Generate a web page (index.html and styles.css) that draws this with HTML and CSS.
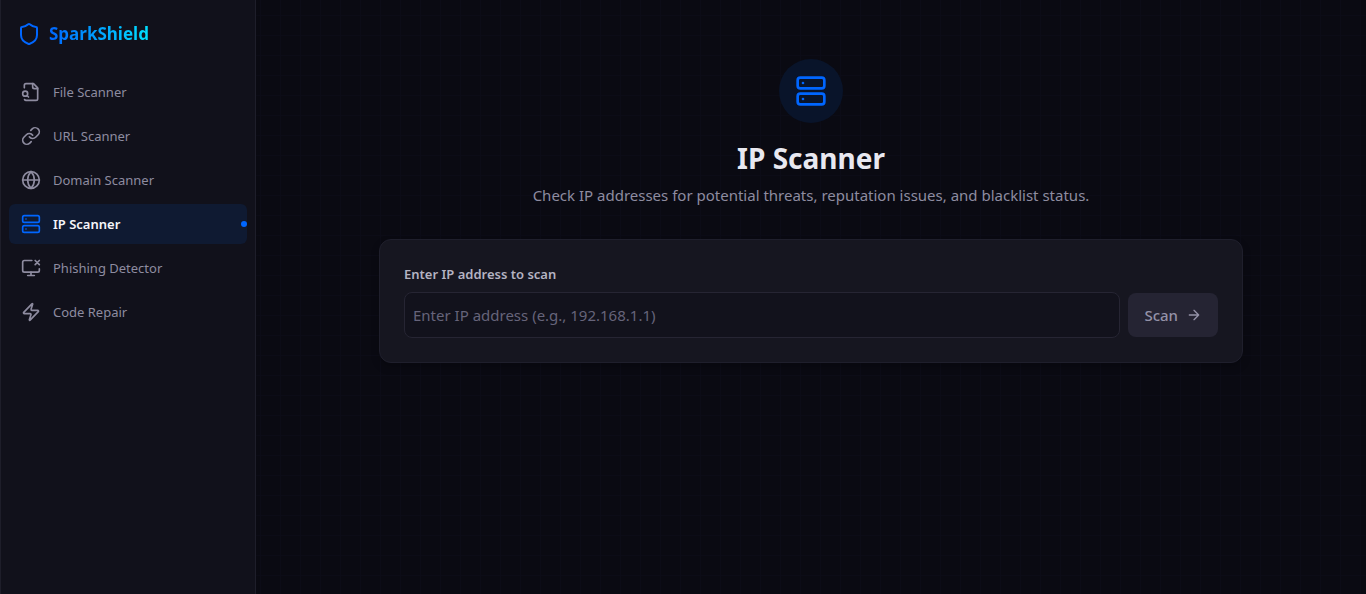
FILE: index.html
```html
<!DOCTYPE html>
<html lang="en">
<head>
<meta charset="utf-8">
<meta name="viewport" content="width=device-width, initial-scale=1">
<title>SparkShield – IP Scanner</title>
<link rel="stylesheet" href="styles.css">
</head>
<body>
<div class="app">
  <aside class="sidebar">
    <a class="brand" href="#">
      <svg class="icon icon-brand" viewBox="0 0 24 24"><path d="M20 13c0 5-3.500 7.500-7.660 8.950a1 1 0 0 1-.67-.01C7.500 20.500 4 18 4 13V6a1 1 0 0 1 1-1c2 0 4.500-1.200 6.240-2.720a1.170 1.170 0 0 1 1.520 0C14.510 3.810 17 5 19 5a1 1 0 0 1 1 1z"/></svg>
      <span class="brand-name">SparkShield</span>
    </a>
    <nav class="nav">
      <a class="nav-link" href="#">
        <svg class="icon" viewBox="0 0 24 24"><path d="M14 2v4a2 2 0 0 0 2 2h4"/><path d="M4.268 21a2 2 0 0 0 1.727 1H18a2 2 0 0 0 2-2V7l-5-5H6a2 2 0 0 0-2 2v3"/><path d="m9 18-1.500-1.500"/><circle cx="5" cy="14" r="3"/></svg>
        <span>File Scanner</span>
      </a>
      <a class="nav-link" href="#">
        <svg class="icon" viewBox="0 0 24 24"><path d="M10 13a5 5 0 0 0 7.540.54l3-3a5 5 0 0 0-7.070-7.070l-1.720 1.710"/><path d="M14 11a5 5 0 0 0-7.540-.54l-3 3a5 5 0 0 0 7.070 7.070l1.710-1.710"/></svg>
        <span>URL Scanner</span>
      </a>
      <a class="nav-link" href="#">
        <svg class="icon" viewBox="0 0 24 24"><circle cx="12" cy="12" r="10"/><path d="M12 2a14.500 14.500 0 0 0 0 20 14.500 14.500 0 0 0 0-20"/><path d="M2 12h20"/></svg>
        <span>Domain Scanner</span>
      </a>
      <a class="nav-link nav-link-active" href="#" aria-current="page">
        <svg class="icon" viewBox="0 0 24 24"><rect x="2" y="2" width="20" height="8" rx="2"/><rect x="2" y="14" width="20" height="8" rx="2"/><path d="M6 6h.01M6 18h.01"/></svg>
        <span>IP Scanner</span>
      </a>
      <a class="nav-link" href="#">
        <svg class="icon" viewBox="0 0 24 24"><path d="M22 13v2a2 2 0 0 1-2 2H4a2 2 0 0 1-2-2V5a2 2 0 0 1 2-2h9"/><path d="m17 3 5 5M22 3l-5 5"/><path d="M12 17v4M8 21h8"/></svg>
        <span>Phishing Detector</span>
      </a>
      <a class="nav-link" href="#">
        <svg class="icon" viewBox="0 0 24 24"><path d="M4 14a1 1 0 0 1-.78-1.630l9.900-10.200a.5.5 0 0 1 .86.460l-1.920 6.020A1 1 0 0 0 13 10h7a1 1 0 0 1 .78 1.630l-9.900 10.200a.5.5 0 0 1-.86-.460l1.920-6.020A1 1 0 0 0 11 14z"/></svg>
        <span>Code Repair</span>
      </a>
    </nav>
  </aside>
  <main class="main">
    <div class="content">
      <header class="intro">
        <div class="intro-badge">
          <svg class="icon icon-intro" viewBox="0 0 24 24"><rect x="2" y="2" width="20" height="8" rx="2"/><rect x="2" y="14" width="20" height="8" rx="2"/><path d="M6 6h.01M6 18h.01"/></svg>
        </div>
        <h1 class="title">IP Scanner</h1>
        <p class="subtitle">Check IP addresses for potential threats, reputation issues, and blacklist status.</p>
      </header>
      <form class="card">
        <label class="label" for="ip">Enter IP address to scan</label>
        <div class="row">
          <input class="input" id="ip" type="text" placeholder="Enter IP address (e.g., 192.168.1.1)">
          <button class="scan" type="button">
            <span>Scan</span>
            <svg class="icon icon-small" viewBox="0 0 24 24"><path d="M5 12h14M12 5l7 7-7 7"/></svg>
          </button>
        </div>
      </form>
    </div>
  </main>
</div>
</body>
</html>
```
FILE: styles.css
```css
* { box-sizing: border-box; }
body {
  margin: 0;
  background-color: #0a0a12;
  background-image:
    linear-gradient(to right, #0c0c17 1px, transparent 1px),
    linear-gradient(to bottom, #0c0c17 1px, transparent 1px);
  background-size: 20px 20px;
  background-position: 0 15px;
  color: #e8e8f0;
  font-family: "Noto Sans", "Open Sans", sans-serif;
  font-size: 15px;
  line-height: 24px;
}
.app { display: flex; min-height: 100vh; }
.icon {
  width: 20px;
  height: 20px;
  flex: none;
  fill: none;
  stroke: currentColor;
  stroke-width: 2;
  stroke-linecap: round;
  stroke-linejoin: round;
}
.icon-brand { width: 24px; height: 24px; color: #0066ff; }
.icon-intro { width: 36px; height: 36px; }
.icon-small { width: 16px; height: 16px; }
.sidebar {
  width: 256px;
  flex: none;
  padding: 0 8px;
  background: #11111b;
  border: solid #1e1e2a;
  border-width: 0 1px;
}
.brand {
  display: flex;
  align-items: center;
  gap: 8px;
  padding: 20px 8px;
  height: 68px;
  text-decoration: none;
}
.brand-name {
  font-size: 17px;
  line-height: 30px;
  font-weight: 700;
  background: linear-gradient(to right, #0066ff, #00e0ff);
  background-clip: text;
  -webkit-background-clip: text;
  color: transparent;
}
.nav { display: flex; flex-direction: column; gap: 4px; padding-top: 4px; }
.nav-link {
  position: relative;
  display: flex;
  align-items: center;
  gap: 12px;
  padding: 10px 12px;
  border-radius: 6px;
  font-size: 13px;
  line-height: 20px;
  color: #8e8ca0;
  text-decoration: none;
}
.nav-link-active { background: #0f1a32; color: #0066ff; font-weight: 600; }
.nav-link-active span { color: #f5f5fa; }
.nav-link-active::after {
  content: "";
  position: absolute;
  right: 0;
  top: 17px;
  width: 6px;
  height: 6px;
  border-radius: 50%;
  background: #0066ff;
}
.main { flex: 1; min-width: 0; }
.content { max-width: 896px; margin: 0 auto; padding: 59px 16px 32px; }
.intro { display: flex; flex-direction: column; align-items: center; text-align: center; margin-bottom: 32px; }
.intro-badge {
  display: grid;
  place-items: center;
  width: 64px;
  height: 64px;
  margin-bottom: 16px;
  border-radius: 50%;
  background: #09142a;
  color: #0066ff;
}
.icon-intro { width: 32px; height: 32px; }
.title { margin: 0 0 6px; font-size: 28px; line-height: 38px; font-weight: 700; }
.subtitle { margin: 0; color: #8e8ca0; }
.card {
  padding: 24px;
  background: #161620;
  border: 1px solid #1f1f2c;
  border-radius: 12px;
  box-shadow: 0 4px 8px rgba(0, 0, 0, 0.2);
}
.label { display: block; margin-bottom: 8px; font-size: 13px; line-height: 20px; font-weight: 600; color: #b4b3c2; }
.row { display: flex; align-items: center; gap: 8px; }
.input {
  flex: 1;
  min-width: 0;
  height: 46px;
  padding: 0 8px;
  background: #12121c;
  border: 1px solid #262533;
  border-radius: 8px;
  color: #e8e8f0;
  font: inherit;
}
.input::placeholder { color: #66647a; opacity: 1; }
.scan {
  display: flex;
  align-items: center;
  gap: 8px;
  height: 44px;
  padding: 0 16px;
  border: 0;
  border-radius: 8px;
  background: #252433;
  color: #9492a8;
  font: inherit;
  font-weight: 500;
}
```
